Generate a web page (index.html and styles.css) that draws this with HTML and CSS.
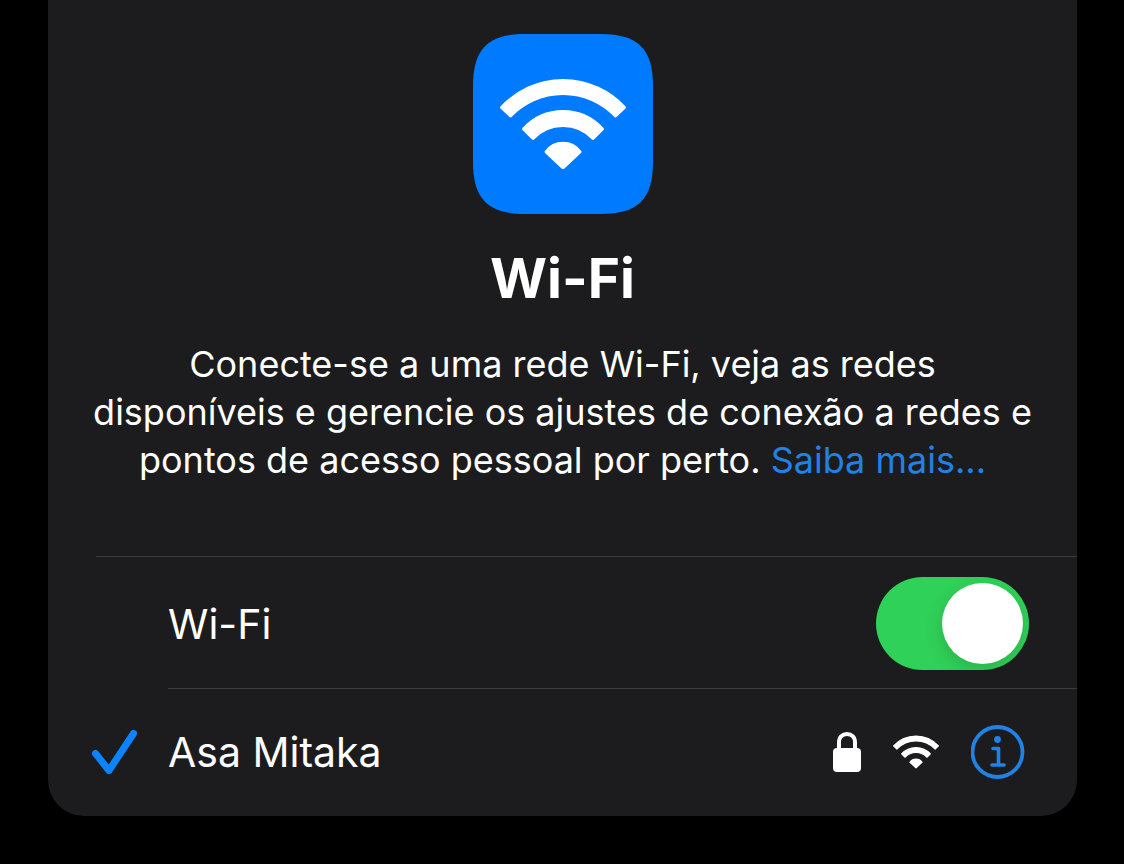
FILE: index.html
```html
<!DOCTYPE html>
<html lang="pt-BR">
<head>
    <meta charset="utf-8">
    <meta name="viewport" content="width=device-width, initial-scale=1">
    <title>Wi-Fi</title>
    <link rel="stylesheet" href="styles.css">
</head>
<body>
<main class="card">
    <header class="intro">
        <svg class="app-icon" viewBox="0 0 180 180" aria-hidden="true">
            <path fill="#007aff" d="M52 0H128C165 0 180 15 180 52V128C180 165 165 180 128 180H52C15 180 0 165 0 128V52C0 15 15 0 52 0Z"/>
            <g id="wifi" fill="#fff" stroke="#fff" stroke-width="3" stroke-linejoin="round">
                <path d="M28.500 73.500A83.500 83.500 0 0 1 151.500 73.500L142.500 82A72.500 72.500 0 0 0 37.500 82Z"/>
                <path d="M50.500 95A53.300 53.300 0 0 1 129.500 95L120 104.500A41 41 0 0 0 60 104.500Z"/>
                <path d="M73 118A21 21 0 0 1 107 118L91 133Q90 134 89 133Z"/>
            </g>
        </svg>
        <h1>Wi-Fi</h1>
        <p>Conecte-se a uma rede Wi-Fi, veja as redes disponíveis e gerencie os ajustes de conexão a redes e pontos de acesso pessoal por perto. <a href="#">Saiba mais...</a></p>
    </header>

    <ul class="list">
        <li class="row">
            <span class="mark"></span>
            <div class="cell">
                <label class="name" for="wifi-on">Wi-Fi</label>
                <input class="switch" type="checkbox" id="wifi-on" checked>
            </div>
        </li>
        <li class="row">
            <span class="mark">
                <svg class="check" viewBox="0 0 46 46" aria-hidden="true">
                    <path d="M4.500 23.500L18 40.500L42.500 3.500"/>
                </svg>
            </span>
            <div class="cell network">
                <span class="name">Asa Mitaka</span>
                <svg class="lock" viewBox="0 0 28 40" aria-hidden="true">
                    <rect y="16" width="28" height="24" rx="4" fill="#fff"/>
                    <path d="M6 18V10.500C6 5 9.500 2 14 2S22 5 22 10.500V18" fill="none" stroke="#fff" stroke-width="4"/>
                </svg>
                <svg class="signal" viewBox="27 45 126 90" aria-hidden="true"><use href="#wifi"/></svg>
                <button class="info" type="button" aria-label="Mais informações">
                    <svg viewBox="0 0 54 54" aria-hidden="true">
                        <circle cx="26.500" cy="27" r="25" fill="none" stroke="currentColor" stroke-width="3.800"/>
                        <circle cx="26.500" cy="14.500" r="3.400" fill="currentColor"/>
                        <path d="M22 23.500H27.500V40M21 40H33" fill="none" stroke="currentColor" stroke-width="3.600" stroke-linecap="round" stroke-linejoin="round"/>
                    </svg>
                </button>
            </div>
        </li>
    </ul>
</main>
</body>
</html>
```
FILE: styles.css
```css
*{
    box-sizing: border-box;
}

body{
    margin: 0;
    padding: 0 47px 48px 48px;
    background: #000;
    color: #fff;
    font-family: Inter, "Liberation Sans", sans-serif;
}

svg{
    display: block;
    flex: none;
}

.card{
    background: #1c1c1e;
    border-radius: 0 0 36px 36px;
    overflow: hidden;
}

.intro{
    padding: 34px 44px 72px;
    text-align: center;
}

.app-icon{
    width: 180px;
    height: 180px;
    margin: 0 auto;
}

h1{
    margin: 32px 0 30px;
    font-size: 55px;
    line-height: 64px;
    font-weight: 700;
}

p{
    margin: 0;
    font-size: 36px;
    line-height: 48px;
}

a{
    color: #1f82e4;
    text-decoration: none;
}

.list{
    list-style: none;
    margin: 0 0 0 48px;
    padding: 0;
    border-top: 1px solid #3d3d40;
}

.row{
    display: flex;
    align-items: stretch;
}

.mark{
    display: flex;
    align-items: center;
    width: 72px;
    flex: none;
}

.check{
    width: 46px;
    height: 46px;
    margin-left: -5px;
    fill: none;
    stroke: #0a84ff;
    stroke-width: 7;
    stroke-linecap: round;
    stroke-linejoin: round;
}

.cell{
    display: flex;
    align-items: center;
    flex: 1;
    min-height: 132px;
    padding: 2px 48px 0 0;
    border-bottom: 1px solid #3d3d40;
}

.name{
    flex: 1;
    font-size: 41px;
    line-height: 52px;
}

.network{
    gap: 32px;
    min-height: 127px;
    padding: 0 52px 2px 0;
    border-bottom: 0;
}

.switch{
    appearance: none;
    display: flex;
    justify-content: flex-end;
    width: 153px;
    height: 93px;
    margin: 0;
    padding: 6px;
    overflow: hidden;
    border-radius: 47px;
    background: #30d158;
}

.switch::before{
    content: "";
    width: 81px;
    height: 81px;
    border-radius: 50%;
    background: #fff;
    box-shadow: 0 6px 18px rgba(0, 0, 0, 0.15);
}

.switch:not(:checked){
    justify-content: flex-start;
    background: #39393d;
}

.lock{
    width: 28px;
    height: 40px;
}

.signal{
    width: 46px;
    height: 34px;
}

.info{
    width: 54px;
    height: 54px;
    padding: 0;
    border: 0;
    background: none;
    color: #1f82e4;
}
```
